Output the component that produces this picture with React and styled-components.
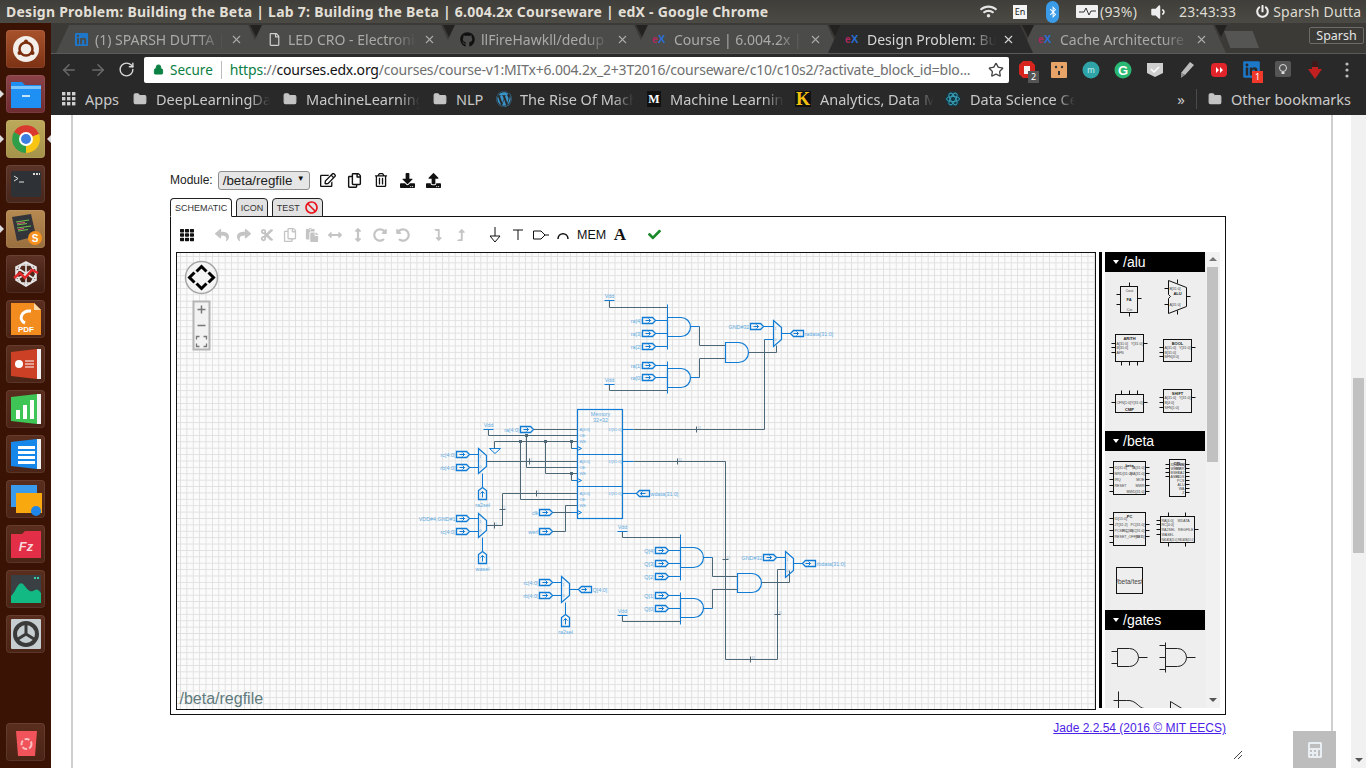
import React from "react";
import styled, { createGlobalStyle } from "styled-components";
import { ArrowLeft, ArrowRight, RotateCw, Star, Lock, X, Folder } from "lucide-react";
import {
  FaTh, FaReply, FaShare, FaCut, FaRegCopy, FaPaste, FaArrowsAltH, FaArrowsAltV, FaRedoAlt, FaUndoAlt,
  FaLevelDownAlt, FaLevelUpAlt, FaCheck, FaRegEdit, FaRegTrashAlt, FaDownload, FaUpload,
  FaCalculator, FaBan, FaLinkedin, FaGithub, FaRegFile, FaWordpress, FaBluetoothB, FaPowerOff, FaVolumeDown, FaWifi,
} from "react-icons/fa";

const UI = '"Noto Sans", "Open Sans", sans-serif';
const ARIAL = '"Liberation Sans", Arial, sans-serif';

const GlobalStyle = createGlobalStyle`
  html, body { margin: 0; padding: 0; background: #fff; overflow: hidden; }
  * { box-sizing: border-box; }
`;

const Screen = styled.div`
  width: 1366px; height: 768px; position: relative; overflow: hidden;
  display: flex; flex-direction: column; font-family: ${UI};
`;

/* top panel of the desktop */
const TopBar = styled.div`
  height: 23px; flex: none; display: flex; align-items: center; padding-left: 6px;
  background: linear-gradient(#3f3e3a, #4b4a44); color: #e2dfd6;
`;
const WinTitle = styled.div`
  width: 974px; font-weight: 700; font-size: 14px; letter-spacing: 0.25px; white-space: nowrap; overflow: hidden;
`;
const Tray = styled.div`
  display: flex; align-items: center; margin-left: ${(p) => p.$ml || 0}px; font-size: 14px; letter-spacing: 0.2px; color: #dedbd2; white-space: nowrap;
`;
const EnBox = styled.div`
  width: 14px; height: 14px; background: #f4f4f4; color: #222; font-size: 9px; letter-spacing: 0; display: flex; align-items: center; justify-content: center;
`;
const BtPill = styled.div`
  width: 13px; height: 22px; border-radius: 7px; background: #3a9be8; color: #fff; display: flex; align-items: center; justify-content: center;
`;

const Body = styled.div`
  flex: 1; display: flex; min-height: 0;
`;

/* launcher */
const Launcher = styled.div`
  width: 51px; flex: none; background: #3a1305; display: flex; flex-direction: column; align-items: center;
  gap: 7px; padding: 7px 0 7px 0;
`;
const Tile = styled.div`
  width: 39px; height: 38px; border-radius: 4px; position: relative; flex: none;
  display: flex; align-items: center; justify-content: center;
  background: linear-gradient(${(p) => p.$a}, ${(p) => p.$b});
  box-shadow: inset 0 0 0 1px rgba(255,255,255,0.08);
  margin-top: ${(p) => (p.$bottom ? "auto" : "0")};
`;
const Pip = styled.div`
  position: absolute; top: 15px; width: 0; height: 0; border-top: 4px solid transparent; border-bottom: 4px solid transparent;
  ${(p) => (p.$right ? "right: -6px; border-right: 4px solid #ddd;" : "left: -6px; border-left: 4px solid #ddd;")}
`;

const Main = styled.div`
  flex: 1; min-width: 0; display: flex; flex-direction: column;
`;

/* chrome tab strip */
const TabStrip = styled.div`
  height: 30px; flex: none; background: #3b3a36; display: flex; align-items: flex-end; padding-left: 5px; position: relative;
`;
const TabWrap = styled.div`
  position: relative; width: 205px; height: 28px; margin-right: -12px; flex: none; z-index: ${(p) => (p.$active ? 2 : 1)};
`;
const TabShape = styled.div`
  width: 100%; height: 100%; display: flex; align-items: center; padding: 0 18px 0 17px;
  clip-path: polygon(0 100%, 13px 0, calc(100% - 13px) 0, 100% 100%);
  background: ${(p) => (p.$active ? "#2b2b2b" : "#4b4b49")};
  color: ${(p) => (p.$active ? "#d6d6d6" : "#aaaaa6")};
  font-size: 14px;
`;
const Notch = styled.div`
  position: absolute; top: 0; right: -1px; width: 0; height: 0; border-left: 6px solid transparent; border-right: 6px solid transparent;
  border-top: 12px solid #232220;
`;
const TabIcon = styled.div`
  width: 16px; height: 16px; flex: none; display: flex; align-items: center; justify-content: center; margin-right: 6px; font-size: 11px; font-weight: 700;
`;
const TabLabel = styled.div`
  flex: 1; white-space: nowrap; overflow: hidden; min-width: 0;
  mask-image: linear-gradient(to right, #000 80%, transparent);
`;
const NewTab = styled.div`
  width: 35px; height: 17px; margin: 0 0 5px 10px; background: #555553; flex: none;
  clip-path: polygon(0 0, 82% 0, 100% 100%, 18% 100%);
`;
const Profile = styled.div`
  position: absolute; right: 2px; top: 4px; width: 55px; height: 17px; border: 1px solid #6d6c68; border-radius: 2px;
  color: #e4e4e4; font-size: 12.5px; display: flex; align-items: center; justify-content: center;
`;

/* chrome toolbar */
const NavRow = styled.div`
  height: 32px; flex: none; background: #292929; border-top: 1px solid #5a5a58; display: flex; align-items: center; padding-left: 3px;
`;
const NavBtn = styled.div`
  width: 29px; display: flex; justify-content: center; color: ${(p) => (p.$off ? "#6a6a6a" : "#d8d8d8")};
`;
const Omni = styled.div`
  width: 865px; height: 26px; margin-left: 3px; background: #fff; border-radius: 2px; display: flex; align-items: center;
  padding: 0 5px 0 9px; font-size: 14px; white-space: nowrap; color: #6f6f6f; flex: none; letter-spacing: -0.19px;
`;
const Secure = styled.span`
  color: #0b8043; margin-left: 6px; letter-spacing: 0; font-size: 13.5px;
`;
const OmniSep = styled.span`
  width: 1px; height: 18px; background: #bdbdbd; margin: 0 8px 0 8px;
`;
const Https = styled.span` color: #0b8043; `;
const Domain = styled.span` color: #111; `;
const OmniStar = styled.div` margin-left: auto; display: flex; color: #444; `;
const ExtSlot = styled.div`
  width: 32px; height: 24px; flex: none; position: relative; display: flex; align-items: center; justify-content: center;
  margin-left: ${(p) => p.$ml || 0}px;
`;
const Badge = styled.div`
  position: absolute; left: 17px; top: 13px; width: 11px; height: 12px; color: #fff; font-size: 9px; display: flex; align-items: center; justify-content: center;
  background: ${(p) => p.$bg};
`;

/* bookmarks */
const BookmarkRow = styled.div`
  height: 30px; flex: none; background: #292929; display: flex; align-items: center; padding: 0 15px 2px 11px; color: #c9c9c9; font-size: 14.5px;
`;
const Bookmark = styled.div`
  display: flex; align-items: center; gap: ${(p) => p.$gap || 9}px; width: ${(p) => p.$w}px; flex: none; white-space: nowrap;
  svg { flex: none; }
`;
const BookmarkText = styled.div`
  overflow: hidden; white-space: nowrap; max-width: 114px;
  ${(p) => p.$fade && "mask-image: linear-gradient(to right, #000 82%, transparent);"}
`;
const Chevrons = styled.div` margin-left: auto; font-size: 15px; color: #c9c9c9; `;
const BmSep = styled.div` width: 1px; height: 20px; background: #4a4a4a; margin: 0 11px 0 11px; `;
const MarkSquare = styled.div`
  width: ${(p) => p.$w}px; height: 16px; background: ${(p) => p.$bg}; color: ${(p) => p.$fg}; font-family: "Liberation Serif", serif; font-weight: 700;
  font-size: ${(p) => p.$fs}px; display: flex; align-items: center; justify-content: center; flex: none;
`;

/* page */
const PageWrap = styled.div`
  flex: 1; min-height: 0; display: flex; background: #fff;
`;
const Content = styled.div`
  width: 1262px; margin-left: 20px; flex: none; border-left: 2px solid #cfcfcf; border-right: 2px solid #cfcfcf; padding: 55px 0 0 97px;
`;
const ModuleRow = styled.div`
  display: flex; align-items: center; height: 20px; font-family: ${ARIAL}; font-size: 12px; color: #222; margin-bottom: 8px;
`;
const ModuleSelect = styled.div`
  width: 92px; height: 19px; margin-left: 5px; background: #e6e6e6; border: 1px solid #8f8f8f; border-radius: 3px; display: flex; align-items: center;
  padding-left: 4px; font-size: 13.33px; color: #222; white-space: nowrap; justify-content: space-between; padding-right: 4px; margin-right: 5px;
`;
const SelArrow = styled.span` font-size: 8px; color: #111; margin-top: -3px; `;
const ModIcon = styled.div` width: 26.5px; display: flex; justify-content: center; color: #111; `;
const TabRow = styled.div`
  display: flex; gap: 3.5px; height: 19px; margin-bottom: -1px; position: relative; z-index: 1;
`;
const EdTab = styled.div`
  height: 19px; border: 1px solid #222; border-radius: 4px 4px 0 0; padding: 0 4px; display: flex; align-items: center; gap: 5px;
  font-family: ${ARIAL}; font-size: 9px; color: #333; background: ${(p) => (p.$active ? "#fff" : "#e2e2e2")};
  ${(p) => p.$active && "border-bottom-color: #fff;"}
`;
const Frame = styled.div`
  width: 1056px; height: 499px; border: 1px solid #111; background: #fff; display: flex; flex-direction: column;
`;
const ToolBar = styled.div`
  height: 35px; flex: none; display: flex; align-items: center; gap: 12px; padding-left: 4.6px; font-family: ${ARIAL};
`;
const ToolGroup = styled.div` display: flex; align-items: center; `;
const Tool = styled.div`
  width: ${(p) => p.$w || 22.7}px; display: flex; justify-content: center; align-items: center;
  color: ${(p) => p.$color || "#111"}; font-size: ${(p) => p.$fs || 14}px;
`;
const SerifA = styled(Tool)`
  font-family: "Liberation Serif", serif; font-weight: 700;
`;
const EditorBody = styled.div`
  flex: 1; min-height: 0; display: flex; align-items: flex-start; padding-left: 5px;
`;
const Canvas = styled.div`
  width: 920px; height: 458px; border: 1px solid #111; flex: none; line-height: 0;
  background-color: #fbfbfb;
  background-image: linear-gradient(#e0e0e0 1px, transparent 1px), linear-gradient(90deg, #e0e0e0 1px, transparent 1px);
  background-size: 6.4px 6.4px;
  background-position: 3px 3px;
`;
const ThickBar = styled.div`
  width: 3px; height: 456px; background: #000; margin: 0 3px; flex: none;
`;
const Bin = styled.div`
  width: 115px; height: 456px; flex: none; display: flex; background: #eee;
`;
const BinColumn = styled.div`
  width: 100px; flex: none; overflow: hidden; line-height: 0;
`;
const BinHeader = styled.div`
  height: 20px; background: #000; color: #fff; font-family: ${ARIAL}; font-size: 14px; line-height: 20px; display: flex; align-items: center; padding-left: 8px;
`;
const BinCaret = styled.span`
  width: 0; height: 0; border-left: 3.5px solid transparent; border-right: 3.5px solid transparent; border-top: 4px solid #fff; margin-right: 4px;
`;
const BinScroll = styled.div`
  flex: 1; display: flex; flex-direction: column; align-items: center; padding-top: 5px; position: relative; margin-left: 1px; background: #f1f1f1;
`;
const ArrowUp = styled.div`
  width: 0; height: 0; border-left: 4px solid transparent; border-right: 4px solid transparent; border-bottom: 4px solid #777; flex: none;
  margin-top: ${(p) => p.$mt || 0}px;
`;
const ArrowDown = styled.div`
  width: 0; height: 0; border-left: 4px solid transparent; border-right: 4px solid transparent; border-top: 4px solid #555; flex: none;
  margin-top: auto; margin-bottom: ${(p) => p.$mb || 0}px;
`;
const BinThumb = styled.div`
  width: 11px; height: 195px; background: #c1c1c1; margin-top: 6px; flex: none; margin-right: 2px;
`;
const Footer = styled.div`
  width: 1056px; text-align: right; font-family: ${ARIAL}; font-size: 12px; line-height: 14px; padding-top: 6px;
`;
const JadeLink = styled.a`
  color: #4b22e6; text-decoration: underline;
`;
const PageScroll = styled.div`
  width: 15px; margin-left: auto; background: #f1f1f1; display: flex; flex-direction: column; align-items: center; flex: none;
`;
const PageThumb = styled.div`
  width: 11px; height: 175px; background: #c1c1c1; margin-top: 263px; flex: none;
`;
const CalcButton = styled.div`
  position: absolute; left: 1293px; top: 731px; width: 43px; height: 37px; background: #bdbdbd; color: #e9eef3;
  display: flex; align-items: center; justify-content: center; font-size: 16px;
`;
const ResizeGrip = styled.svg`
  position: absolute; left: 1233px; top: 750px;
`;

/* schematic text */
const Lbl = styled.text`
  font-family: ${ARIAL}; font-size: ${(p) => p.$s || 5.4}px; fill: ${(p) => p.$c || "#62aae0"};
`;

const BLUE = "#0f7bd4";
const GRAY = "#4d6776";

const Port = ({ x, y, label, left, back }) => {
  const shape = left
    ? `M${x + 13} ${y - 3}H${x + 3}L${x} ${y}L${x + 3} ${y + 3}H${x + 13}Z`
    : `M${x} ${y - 3}H${x + 10}L${x + 13} ${y}L${x + 10} ${y + 3}H${x}Z`;
  const arrow = back
    ? `M${x + 9} ${y}H${x + 4}M${x + 6} ${y - 2}L${x + 4} ${y}L${x + 6} ${y + 2}`
    : `M${x + 3} ${y}H${x + 8}M${x + 6} ${y - 2}L${x + 8} ${y}L${x + 6} ${y + 2}`;
  return (
    <g>
      <path d={shape} fill="none" stroke={BLUE} strokeWidth={1.3} />
      <path d={arrow} fill="none" stroke={BLUE} />
      {left ? (
        <Lbl x={x + 14} y={y + 2}>{label}</Lbl>
      ) : (
        <Lbl x={x - 1} y={y + 2} textAnchor="end">{label}</Lbl>
      )}
    </g>
  );
};

const UpPort = ({ x, y, label }) => (
  <g>
    <path d={`M${x - 4} ${y + 12}V${y + 3}L${x} ${y}L${x + 4} ${y + 3}V${y + 12}Z`} fill="none" stroke={BLUE} strokeWidth={1.3} />
    <path d={`M${x} ${y + 10}V${y + 4}M${x - 2} ${y + 6}L${x} ${y + 4}L${x + 2} ${y + 6}`} fill="none" stroke={BLUE} />
    <Lbl x={x} y={y + 19} textAnchor="middle">{label}</Lbl>
  </g>
);

const AndGate = ({ x, t, b, r }) => {
  const h = (b - t) / 2;
  return <path d={`M${x} ${t}H${r - h}A${h} ${h} 0 0 1 ${r - h} ${b}H${x}Z`} fill="none" stroke={BLUE} strokeWidth={1.2} />;
};

const Mux = ({ x, t, b }) => (
  <g>
    <path d={`M${x} ${t}L${x + 8} ${t + 7}V${b - 7}L${x} ${b}Z`} fill="none" stroke={BLUE} strokeWidth={1.2} />
    <Lbl x={x + 1} y={t + 9} $s={3.5}>1</Lbl>
    <Lbl x={x + 1} y={b - 6} $s={3.5}>0</Lbl>
  </g>
);

const Tick = ({ x, y, flat, n = "32" }) => (
  <g>
    <path d={flat ? `M${x - 3} ${y}H${x + 3}` : `M${x} ${y - 3}V${y + 3}`} stroke={GRAY} fill="none" />
    <Lbl x={x + 1} y={y - 1} $s={3} $c="#8fb4cc">{n}</Lbl>
  </g>
);

const Vdd = ({ x, y }) => (
  <g>
    <Lbl x={x} y={y - 3} textAnchor="middle">Vdd</Lbl>
    <path d={`M${x - 5} ${y}H${x + 5}`} stroke={BLUE} />
  </g>
);

const Junction = ({ x, y }) => <rect x={x - 1.5} y={y - 1.5} width={3} height={3} fill={GRAY} />;

const grayWires = [
  "M609 300V307H667", "M609 384V390H667", "M699 326V345H725", "M699 377V358H725", "M748 352H776V345",
  "M633 429H764V339", "M633 461H725V659H777V569H785",
  "M488 429V435H577", "M494 448V441H577", "M571 441V448H577",
  "M526 435V467H577", "M520 441V499H577", "M545 441V473H577", "M571 473V480H577",
  "M533 429H577", "M486 461H577", "M486 525H502V493H577", "M552 531H565V505H577", "M552 512H577",
  "M622 531V537H680", "M622 615V621H680", "M712 557V576H737", "M712 608V589H737", "M761 582H789V570",
];
const blueWires = [
  "M667 304V349", "M667 361V393", "M655 320H667", "M655 333H667", "M655 346H667", "M655 365H667", "M655 377H667",
  "M690 326H699", "M690 377H699", "M763 326H773", "M764 339H773", "M781 333H790",
  "M622 429H633", "M622 461H633", "M622 493H636",
  "M469 454H478", "M469 467H478", "M482 473V487", "M469 518H478", "M469 531H478", "M482 537V551",
  "M572 448H577", "M572 480H577", "M571 512H577",
  "M680 534V580", "M680 592V624", "M668 550H680", "M668 563H680", "M668 576H680", "M668 595H680", "M668 608H680",
  "M703 557H712", "M703 608H712", "M776 557H785", "M793 563H802", "M552 582H561", "M552 595H561", "M569 589H578", "M565 602V614",
];

const Schematic = () => (
  <svg width="918" height="456" viewBox="176.5 252.5 918 456" style={{ display: "block" }}>
    {grayWires.map((d) => <path key={d} d={d} fill="none" stroke={GRAY} />)}
    {blueWires.map((d) => <path key={d} d={d} fill="none" stroke={BLUE} />)}

    <Vdd x={609} y={300} />
    <Vdd x={609} y={384} />
    <Vdd x={488} y={429} />
    <Vdd x={622} y={531} />
    <Vdd x={622} y={615} />

    <Port x={642} y={320} label="ra[4]" />
    <Port x={642} y={333} label="ra[3]" />
    <Port x={642} y={346} label="ra[2]" />
    <Port x={642} y={365} label="ra[1]" />
    <Port x={642} y={377} label="ra[0]" />
    <AndGate x={667} t={317} b={336} r={690} />
    <AndGate x={667} t={368} b={387} r={690} />
    <AndGate x={725} t={342} b={362} r={748} />
    <Mux x={773} t={320} b={346} />
    <Port x={750} y={326} label="GND#32" />
    <Port x={790} y={333} label="radata[31:0]" left />

    {/* memory */}
    <rect x={577} y={409} width={45} height={109} fill="none" stroke={BLUE} strokeWidth={1.2} />
    <path d="M577 454H622M577 486H622" stroke={BLUE} />
    <Lbl x={600} y={415} textAnchor="middle">Memory</Lbl>
    <Lbl x={600} y={421} textAnchor="middle">32×32</Lbl>
    {[429, 461, 493].map((y) => (
      <g key={y}>
        <Lbl x={579} y={y + 1.5} $s={4}>A[4:0]</Lbl>
        <Lbl x={579} y={y + 7.5} $s={4}>OE</Lbl>
        <Lbl x={579} y={y + 13.5} $s={4}>WE</Lbl>
        <path d={`M577 ${y + 17}L581 ${y + 19}L577 ${y + 21}`} fill="none" stroke={BLUE} />
        <Lbl x={621} y={y + 1.5} $s={4} textAnchor="end">D[31:0]</Lbl>
      </g>
    ))}
    <Port x={520} y={429} label="ra[4:0]" />
    <path d="M489 448H500L494.5 453Z" fill="none" stroke={BLUE} />
    <Junction x={526} y={435} />
    <Junction x={520} y={441} />
    <Junction x={545} y={441} />
    <Junction x={571} y={441} />
    <Junction x={571} y={473} />

    <Port x={456} y={454} label="rc[4:0]" />
    <Port x={456} y={467} label="rb[4:0]" />
    <Mux x={478} t={448} b={473} />
    <UpPort x={482} y={487} label="ra2sel" />
    <Port x={456} y={518} label="VDD#4,GND#1" />
    <Port x={456} y={531} label="rc[4:0]" />
    <Mux x={478} t={513} b={537} />
    <UpPort x={482} y={551} label="wasel" />
    <Port x={539} y={512} label="clk" />
    <Port x={539} y={531} label="werf" />
    <Port x={636} y={493} label="wdata[31:0]" left back />
    <Tick x={696} y={429} />
    <Tick x={677} y={461} />
    <Tick x={529} y={461} n="5" />
    <Tick x={536} y={493} n="5" />
    <Tick x={502} y={509} flat n="5" />
    <Tick x={494} y={525} n="5" />
    <Tick x={725} y={559} flat />
    <Tick x={777} y={614} flat />
    <Tick x={750} y={659} />

    {/* lower half */}
    <Port x={655} y={550} label="Q[4]" />
    <Port x={655} y={563} label="Q[3]" />
    <Port x={655} y={576} label="Q[2]" />
    <Port x={655} y={595} label="Q[1]" />
    <Port x={655} y={608} label="Q[0]" />
    <AndGate x={680} t={547} b={567} r={703} />
    <AndGate x={680} t={598} b={617} r={703} />
    <AndGate x={737} t={573} b={592} r={761} />
    <Mux x={785} t={551} b={577} />
    <Port x={763} y={557} label="GND#32" />
    <Port x={802} y={563} label="rbdata[31:0]" left />

    <Port x={539} y={582} label="rc[4:0]" />
    <Port x={539} y={595} label="rb[4:0]" />
    <Mux x={561} t={576} b={602} />
    <Port x={578} y={589} label="Q[4:0]" left />
    <UpPort x={565} y={614} label="ra2sel" />

    {/* pan and zoom controls */}
    <circle cx={201} cy={277} r={16} fill="#f4f4f4" stroke="#a5a5a5" strokeWidth={1.5} />
    <g fill="none" stroke="#000" strokeWidth={3}>
      <path d="M196 271L201 266L206 271" />
      <path d="M196 283L201 288L206 283" />
      <path d="M194 272L189 277L194 282" />
      <path d="M208 272L213 277L208 282" />
    </g>
    <rect x={193} y={301} width={16} height={48} fill="#f2f2f2" stroke="#b5b5b5" strokeWidth={2} />
    <path d="M197 309H205M201 305V313M197 325H205" stroke="#777" strokeWidth={1.5} fill="none" />
    <path d="M196 339V336H199M203 336H206V339M206 343V346H203M199 346H196V343" stroke="#777" strokeWidth={1.3} fill="none" />

    <Lbl x={179} y={703} $s={16} $c="#5f7a7c">/beta/regfile</Lbl>
  </svg>
);

/* parts bin chips */
const Chip = ({ x, y, w, h, name, nameY, left = [], right = [], top = [], bottom = [] }) => (
  <g>
    <rect x={x} y={y} width={w} height={h} fill="none" stroke="#111" />
    {name && (
      <Lbl x={x + w / 2} y={nameY || y + 5} textAnchor="middle" $s={4} $c="#222" fontWeight="700">{name}</Lbl>
    )}
    {left.map(([t, py]) => (
      <g key={`${t}${py}`}>
        <path d={`M${x - 4} ${py}H${x}`} stroke="#111" />
        <Lbl x={x + 1} y={py + 1.5} $s={3.6} $c="#444">{t}</Lbl>
      </g>
    ))}
    {right.map(([t, py]) => (
      <g key={`${t}${py}`}>
        <path d={`M${x + w} ${py}H${x + w + 4}`} stroke="#111" />
        <Lbl x={x + w - 1} y={py + 1.5} $s={3.6} $c="#444" textAnchor="end">{t}</Lbl>
      </g>
    ))}
    {top.map((px) => <path key={px} d={`M${px} ${y - 4}V${y}`} stroke="#111" />)}
    {bottom.map((px) => <path key={px} d={`M${px} ${y + h}V${y + h + 4}`} stroke="#111" />)}
  </g>
);

const BinGroup = ({ top, h, children }) => (
  <svg width="100" height={h} viewBox={`1104.5 ${top - 0.5} 100 ${h}`} style={{ display: "block" }}>{children}</svg>
);

const AluParts = () => (
  <BinGroup top={272} h={159}>
    <Chip x={1120} y={286} w={17} h={26} name="FA" nameY={300} left={[["", 294], ["", 304]]} right={[["", 298]]} top={[1129]} bottom={[1129]} />
    <Lbl x={1129} y={291} $s={3.5} $c="#444" textAnchor="middle">Cout</Lbl>
    <Lbl x={1129} y={310} $s={3.5} $c="#444" textAnchor="middle">Cin</Lbl>
    <path d="M1168 280L1186 287V306L1168 313V298L1170 296L1168 294Z" fill="none" stroke="#111" />
    <path d="M1177 279V283M1186 296H1190M1164 288H1168M1164 304H1168M1177 310V314" stroke="#111" />
    <Lbl x={1177} y={294} $s={4} $c="#222" fontWeight="700" textAnchor="middle">ALU</Lbl>
    <Lbl x={1169} y={289} $s={3.5} $c="#444">B[31:0]</Lbl>
    <Lbl x={1169} y={305} $s={3.5} $c="#444">A[31:0]</Lbl>
    <Chip x={1115} y={334} w={28} h={27} name="ARITH" left={[["A[31:0]", 343], ["B[31:0]", 347], ["AFN", 352]]} right={[["Y[31:0]", 343]]} bottom={[1121, 1129, 1137]} />
    <Chip x={1163} y={339} w={28} h={22} name="BOOL" left={[["A[31:0]", 347], ["B[31:0]", 352], ["BFN[3:0]", 356]]} right={[["Y[31:0]", 347]]} />
    <Chip x={1115} y={394} w={28} h={18} name="CMP" nameY={410} left={[["CFN[1:0]", 402]]} right={[["Y[31:0]", 402]]} top={[1121, 1129, 1137]} />
    <Chip x={1163} y={389} w={28} h={23} name="SHIFT" left={[["A[31:0]", 397], ["B[4:0]", 402], ["SFN[1:0]", 407]]} right={[["Y[31:0]", 397]]} />
  </BinGroup>
);

const BetaParts = () => (
  <BinGroup top={451} h={159}>
    <Chip x={1113} y={461} w={32} h={33} name="beta" left={[["ID[31:0]", 467], ["MRD[31:0]", 473], ["IRQ", 479], ["RESET", 485], ["", 491]]} right={[["IA[31:0]", 467], ["MA[31:0]", 473], ["MOE", 479], ["MWR", 485], ["MWD[31:0]", 491]]} />
    <Chip x={1169} y={459} w={16} h={37} name="CTL" left={[["ID[31:26]", 464], ["WERF", 468], ["BSEL", 472], ["ASEL", 476]]} right={[["MOE", 464], ["MWR", 468], ["RA2", 472], ["WDS", 476], ["PCS", 480], ["ALU", 484], ["WA", 488], ["Z", 492]]} />
    <Chip x={1113} y={512} w={32} h={33} name="PC" left={[["ID[15:0]", 518], ["JT[31:2]", 524], ["PCSEL[2:0]", 530], ["RESET_OFFSET", 536], ["", 542]]} right={[["PC[31:0]", 524], ["PC_INC[31:0]", 530], ["[31:0]", 536]]} />
    <Chip x={1160} y={516} w={34} h={26} left={[["RA[4:0]", 520], ["RC[4:0]", 524], ["RA2SEL", 529], ["WASEL", 534]]} right={[["REGFILE", 529]]} top={[1168, 1185]} bottom={[1168, 1185]} />
    <Lbl x={1177} y={521} $s={3.5} $c="#444">WDATA</Lbl>
    <Lbl x={1161} y={540} $s={3.5} $c="#444" textLength={32} lengthAdjust="spacingAndGlyphs">RADATA[31:0] RBDATA[31:0]</Lbl>
    <rect x={1116} y={567} width={26} height={26} fill="none" stroke="#111" />
    <Lbl x={1129} y={583} $s={6.5} $c="#444" textAnchor="middle">/beta/test</Lbl>
  </BinGroup>
);

const GateParts = () => (
  <BinGroup top={630} h={78}>
    <path d="M1117 648H1129A9 9 0 0 1 1129 666H1117ZM1111 651H1117M1111 663H1117M1138 657H1147" fill="none" stroke="#222" />
    <path d="M1165 648H1177A9 9 0 0 1 1177 666H1165ZM1165 642V672M1159 645H1165M1159 657H1165M1159 669H1165M1186 657H1195" fill="none" stroke="#222" />
    <path d="M1118 691V709M1113 700H1126C1136 699 1138 708 1144 708H1145" fill="none" stroke="#222" />
    <path d="M1170 701V709M1170 701L1183 709" fill="none" stroke="#222" />
  </BinGroup>
);

/* tool icons that no package has */
const GroundIcon = () => (
  <svg width="16" height="18" viewBox="0 0 16 18"><path d="M8 1V10M3 10H13L8 16Z" fill="none" stroke="#111" strokeWidth="1" /></svg>
);
const TermIcon = () => (
  <svg width="16" height="16" viewBox="0 0 16 16"><path d="M3 3H13M8 3V13" fill="none" stroke="#111" /></svg>
);
const BufIcon = () => (
  <svg width="18" height="16" viewBox="0 0 18 16"><path d="M1.5 4H9L13 8L9 12H1.5ZM13 8H17" fill="none" stroke="#111" /></svg>
);
const ArcIcon = () => (
  <svg width="14" height="14" viewBox="0 0 14 14"><path d="M2 11C2 4 12 4 12 11" fill="none" stroke="#111" strokeWidth="1.5" /></svg>
);
const NoEntry = () => <FaBan size={13} color="#e8131b" />;

/* launcher icons */
const Sv = ({ children }) => <svg width="34" height="34" viewBox="0 0 34 34">{children}</svg>;
const launcherIcons = [
  { a: "#a8522c", b: "#7c3214", pip: false, icon: <Sv><circle cx="17" cy="17" r="13" fill="#f3eee9" /><circle cx="17" cy="17" r="6.5" fill="none" stroke="#7a2e0e" strokeWidth="2.5" /><circle cx="17" cy="9.5" r="2" fill="#7a2e0e" /><circle cx="10.5" cy="21" r="2" fill="#7a2e0e" /><circle cx="23.5" cy="21" r="2" fill="#7a2e0e" /></Sv> },
  { a: "#8b4348", b: "#6e2b30", pip: true, icon: <Sv><path d="M2 5H13L16 8H32V31H2Z" fill="#1e8ff3" /><path d="M2 9H32V12H2Z" fill="#7cc6fb" /><path d="M13 19H21" stroke="#fff" strokeWidth="1.5" /></Sv> },
  { a: "#bda95a", b: "#a5934a", pip: true, pipR: true, icon: <Sv><path d="M17 17L5 10A14 14 0 0 1 30 12Z" fill="#d9392e" /><path d="M17 17L30 12A14 14 0 0 1 17 31Z" fill="#f7c614" /><path d="M17 17L17 31A14 14 0 0 1 5 10Z" fill="#2f9e49" /><circle cx="17" cy="17" r="7" fill="#fff" /><circle cx="17" cy="17" r="5" fill="#3d7fe0" /></Sv> },
  { a: "#5b3428", b: "#47261c", pip: false, icon: <Sv><rect x="2" y="4" width="30" height="26" rx="2" fill="#2e3236" /><path d="M5 9L9 11.5L5 14M10 15H15" fill="none" stroke="#ddd" /><path d="M24 7H31" stroke="#ddd" strokeWidth="2" strokeDasharray="2 1" /></Sv> },
  { a: "#b78a52", b: "#9a6f3f", pip: true, icon: <Sv><path d="M3 5L22 2L27 24L8 29Z" fill="#33353a" /><path d="M7 10L20 8M8 13L18 11.5M8 16L22 14M9 19L19 17.5" stroke="#6cc04a" strokeWidth="1.2" /><path d="M8 11.5L16 10.5M9 17.5L15 16.5" stroke="#e05a7a" strokeWidth="1.2" /><circle cx="26" cy="26" r="7" fill="#f5911e" /><Lbl x="26" y="30" $s={10} $c="#fff" textAnchor="middle" fontWeight="700">S</Lbl></Sv> },
  { a: "#5c3224", b: "#3e1b10", pip: false, icon: <Sv><path d="M17 5L27 10V23L17 29L7 23V10Z M17 5V29 M7 10L27 23 M27 10L7 23 M12 8L7 17L12 26L22 26L27 17L22 8Z" fill="none" stroke="#e6e6e6" strokeWidth="1.6" /><path d="M5 21L11 16L16 21L23 13L29 16" fill="none" stroke="#e3272b" strokeWidth="2.5" /></Sv> },
  { a: "#5a2e1e", b: "#4a2416", pip: false, icon: <Sv><path d="M2 1H25L32 8V33H2Z" fill="#f28c1f" /><path d="M25 1L32 8H25Z" fill="#fbd9a8" /><path d="M22 9C12 8 9 18 16 21" fill="none" stroke="#fff" strokeWidth="3" /><Lbl x="17" y="30" $s={8} $c="#fff" textAnchor="middle" fontWeight="700">PDF</Lbl></Sv> },
  { a: "#5a2e1e", b: "#4a2416", pip: false, icon: <Sv><path d="M2 5L28 2V32L2 29Z" fill="#cc4125" /><path d="M28 2H32V32H28Z" fill="#f2f2f2" /><circle cx="10" cy="17" r="4" fill="#fff" /><path d="M16 14H25M16 17H25M16 20H25" stroke="#fff" /></Sv> },
  { a: "#5a2e1e", b: "#4a2416", pip: false, icon: <Sv><path d="M2 5L28 2V32L2 29Z" fill="#3fc456" /><path d="M28 2H32V32H28Z" fill="#f2f2f2" /><path d="M7 18H11V27H7ZM14 13H18V27H14ZM21 8H25V27H21Z" fill="#fff" /></Sv> },
  { a: "#5a2e1e", b: "#4a2416", pip: false, icon: <Sv><path d="M2 5L28 2V32L2 29Z" fill="#1788ea" /><path d="M28 2H32V32H28Z" fill="#f2f2f2" /><path d="M9 9H26V12H9ZM9 14H26V17H9ZM9 19H26V22H9ZM9 24H26V27H9Z" fill="#fff" /></Sv> },
  { a: "#5a2e1e", b: "#4a2416", pip: false, icon: <Sv><rect x="2" y="3" width="26" height="22" fill="#3a9bec" /><rect x="7" y="11" width="26" height="20" fill="#f9a90e" /><circle cx="27" cy="29" r="5" fill="#1d86e8" /></Sv> },
  { a: "#5a2e1e", b: "#4a2416", pip: false, icon: <Sv><path d="M2 7H13L16 4H32V31H2Z" fill="#e32e48" /><Lbl x="17" y="24" $s={13} $c="#fbd7dc" textAnchor="middle" fontWeight="700" fontStyle="italic">Fz</Lbl></Sv> },
  { a: "#5a2e1e", b: "#4a2416", pip: false, icon: <Sv><rect x="2" y="3" width="30" height="28" fill="#3a3f44" /><path d="M2 24C7 20 9 8 14 12C18 16 20 22 26 18C29 16 31 20 32 21V31H2Z" fill="#13b983" /><path d="M25 6H31" stroke="#3bd0a0" strokeWidth="2" strokeDasharray="2 1" /></Sv> },
  { a: "#5a2e1e", b: "#4a2416", pip: false, icon: <Sv><rect x="2" y="2" width="30" height="30" rx="1" fill="#c5cdd0" /><circle cx="17" cy="17" r="11" fill="none" stroke="#3a3a3a" strokeWidth="4" /><path d="M17 17V8M17 17L9 22M17 17L25 22" stroke="#3a3a3a" strokeWidth="3" /></Sv> },
  { a: "#5a2e1e", b: "#4a2416", pip: false, bottom: true, icon: <Sv><path d="M7 6H28L26 31H9Z" fill="#f0545a" /><circle cx="17.5" cy="19" r="5" fill="none" stroke="#f7c0c2" strokeWidth="2" strokeDasharray="5 2" /></Sv> },
];

const tabs = [
  { label: "(1) SPARSH DUTTA |", icon: <FaLinkedin size={15} color="#1f77c9" /> },
  { label: "LED CRO - Electronic", icon: <FaRegFile size={13} color="#cfcfcf" /> },
  { label: "llFireHawkll/dedup", icon: <FaGithub size={15} color="#111" /> },
  { label: "Course | 6.004.2x | e", edx: true },
  { label: "Design Problem: Bu", edx: true, active: true },
  { label: "Cache Architecture", edx: true },
];

const EdxMark = () => (
  <svg width="16" height="12" viewBox="0 0 16 12">
    <text x="0" y="10" fontFamily={ARIAL} fontSize="10" fontWeight="700" fill="#b5285f">e</text>
    <text x="6" y="10" fontFamily={ARIAL} fontSize="11" fontWeight="700" fill="#2a6fd6">X</text>
  </svg>
);

const extIcons = [
  { icon: <svg width="18" height="20" viewBox="0 0 18 20"><path d="M5 1H13L17 5V14L13 18H5L1 14V5Z" fill="#d8241f" /><path d="M6 14V6H12V14Z" fill="#f3f3f3" /></svg>, badge: "2", bg: "#555" },
  { icon: <svg width="16" height="16" viewBox="0 0 16 16"><rect width="16" height="16" rx="1" fill="#e8a468" /><circle cx="5" cy="5" r="1.2" fill="#333" /><circle cx="11" cy="5" r="1.2" fill="#333" /><path d="M7 9H9V13H7Z" fill="#333" /></svg> },
  { icon: <svg width="18" height="18" viewBox="0 0 18 18"><circle cx="9" cy="9" r="8.5" fill="#2fa4a8" /><text x="9" y="12" textAnchor="middle" fontFamily={ARIAL} fontSize="9" fill="#c9f0ee">m</text></svg> },
  { icon: <svg width="18" height="18" viewBox="0 0 18 18"><circle cx="9" cy="9" r="8.5" fill="#2ab673" /><text x="9" y="13.5" textAnchor="middle" fontFamily={ARIAL} fontSize="13" fontWeight="700" fill="#fff">G</text></svg> },
  { icon: <svg width="18" height="16" viewBox="0 0 18 16"><path d="M1 1H17V11L9 15L1 11Z" fill="#cfcfcf" /><path d="M5 7L8 10L13 5" fill="none" stroke="#fff" strokeWidth="1.5" /></svg> },
  { icon: <svg width="16" height="18" viewBox="0 0 16 18"><path d="M11 1L15 4L6 14L2 12Z" fill="#bdbdbd" /><path d="M2 12L6 14L2 17Z" fill="#8f8f8f" /></svg> },
  { icon: <svg width="18" height="16" viewBox="0 0 18 16"><rect x="1" y="1" width="16" height="14" rx="4" fill="#e2252b" /><path d="M6 5L9 8L6 11ZM10 5L13 8L10 11Z" fill="#fff" /></svg> },
  { icon: <FaLinkedin size={19} color="#1d78c8" />, badge: "1", bg: "#f0392b" },
  { icon: <svg width="16" height="18" viewBox="0 0 16 18"><rect width="16" height="16" rx="2" fill="#555" /><circle cx="8" cy="7" r="3.5" fill="none" stroke="#ddd" /><path d="M6.5 11H9.5V13H6.5Z" fill="#ddd" /></svg> },
  { icon: <svg width="14" height="18" viewBox="0 0 14 18"><path d="M4 0H10V8H14L7 18L0 8H4Z" fill="#c12020" /><path d="M4 0H10V6H4Z" fill="#3a1a1a" /></svg> },
  { icon: <svg width="4" height="16" viewBox="0 0 4 16"><circle cx="2" cy="2" r="1.6" fill="#bdbdbd" /><circle cx="2" cy="8" r="1.6" fill="#bdbdbd" /><circle cx="2" cy="14" r="1.6" fill="#bdbdbd" /></svg> },
];

const FolderIcon = () => <Folder size={14} fill="#c4c4c4" color="#c4c4c4" />;

const AppsGrid = () => (
  <svg width="14" height="14" viewBox="0 0 14 14" fill="#d0d0d0">
    {[0, 5, 10].flatMap((y) => [0, 5, 10].map((x) => <rect key={`${x}${y}`} x={x} y={y} width="3.4" height="3.4" />))}
  </svg>
);

const AtomMark = () => (
  <svg width="16" height="16" viewBox="0 0 16 16" fill="none" stroke="#3aa0b8">
    <circle cx="8" cy="8" r="7.5" fill="#123845" stroke="none" />
    <ellipse cx="8" cy="8" rx="6.5" ry="2.6" />
    <ellipse cx="8" cy="8" rx="6.5" ry="2.6" transform="rotate(60 8 8)" />
    <ellipse cx="8" cy="8" rx="6.5" ry="2.6" transform="rotate(120 8 8)" />
  </svg>
);

export default function App() {
  return (
    <Screen>
      <GlobalStyle />
      <TopBar>
        <WinTitle>Design Problem: Building the Beta | Lab 7: Building the Beta | 6.004.2x Courseware | edX - Google Chrome</WinTitle>
        <Tray><FaWifi size={17} color="#e4e4e4" /></Tray>
        <Tray $ml={16}><EnBox>En</EnBox></Tray>
        <Tray $ml={19}><BtPill><FaBluetoothB size={12} /></BtPill></Tray>
        <Tray $ml={17}>
          <svg width="23" height="13" viewBox="0 0 23 13"><rect width="22" height="13" rx="1" fill="#f1f1f1" /><path d="M3 7H8L10 3L13 10L15 6H20" fill="none" stroke="#333" /></svg>
        </Tray>
        <Tray $ml={1}>(93%)</Tray>
        <Tray $ml={12}><FaVolumeDown size={18} color="#eee" /></Tray>
        <Tray $ml={12}>23:43:33</Tray>
        <Tray $ml={20}><FaPowerOff size={13} color="#eee" /></Tray>
        <Tray $ml={4}>Sparsh Dutta</Tray>
      </TopBar>
      <Body>
        <Launcher>
          {launcherIcons.map((t, i) => (
            <Tile key={i} $a={t.a} $b={t.b} $bottom={t.bottom}>
              {t.pip && <Pip />}
              {t.pipR && <Pip $right />}
              {t.icon}
            </Tile>
          ))}
        </Launcher>
        <Main>
          <TabStrip>
            {tabs.map((t) => (
              <TabWrap key={t.label} $active={t.active}>
                <TabShape $active={t.active}>
                  <TabIcon>{t.edx ? <EdxMark /> : t.icon}</TabIcon>
                  <TabLabel>{t.label}</TabLabel>
                  <X size={13} style={{ flex: "none", marginLeft: 6 }} />
                </TabShape>
                <Notch />
              </TabWrap>
            ))}
            <NewTab />
            <Profile>Sparsh</Profile>
          </TabStrip>
          <NavRow>
            <NavBtn $off><ArrowLeft size={18} /></NavBtn>
            <NavBtn $off><ArrowRight size={18} /></NavBtn>
            <NavBtn><RotateCw size={17} /></NavBtn>
            <Omni>
              <Lock size={11} fill="#0b8043" color="#0b8043" />
              <Secure>Secure</Secure>
              <OmniSep />
              <Https>https</Https>://<Domain>courses.edx.org</Domain>/courses/course-v1:MITx+6.004.2x_2+3T2016/courseware/c10/c10s2/?activate_block_id=blo...
              <OmniStar><Star size={16} /></OmniStar>
            </Omni>
            {extIcons.map((e, i) => (
              <ExtSlot key={i} $ml={i === 0 ? 2 : 0}>
                {e.icon}
                {e.badge && <Badge $bg={e.bg}>{e.badge}</Badge>}
              </ExtSlot>
            ))}
          </NavRow>
          <BookmarkRow>
            <Bookmark $w={71}><AppsGrid /><BookmarkText>Apps</BookmarkText></Bookmark>
            <Bookmark $w={150}><FolderIcon /><BookmarkText $fade>DeepLearningData</BookmarkText></Bookmark>
            <Bookmark $w={150}><FolderIcon /><BookmarkText $fade>MachineLearning</BookmarkText></Bookmark>
            <Bookmark $w={63}><FolderIcon /><BookmarkText>NLP</BookmarkText></Bookmark>
            <Bookmark $w={151} $gap={8}><FaWordpress size={16} color="#3a93c8" /><BookmarkText $fade>The Rise Of Machines</BookmarkText></Bookmark>
            <Bookmark $w={148} $gap={9}><MarkSquare $w={14} $bg="#111" $fg="#fff" $fs={12}>M</MarkSquare><BookmarkText $fade>Machine Learning</BookmarkText></Bookmark>
            <Bookmark $w={150} $gap={9}><MarkSquare $w={16} $bg="#111" $fg="#f5c211" $fs={18}>K</MarkSquare><BookmarkText $fade>Analytics, Data Mining</BookmarkText></Bookmark>
            <Bookmark $w={130} $gap={9}><AtomMark /><BookmarkText $fade>Data Science Central</BookmarkText></Bookmark>
            <Chevrons>»</Chevrons>
            <BmSep />
            <Bookmark $w={143}><FolderIcon />Other bookmarks</Bookmark>
          </BookmarkRow>
          <PageWrap>
            <Content>
              <ModuleRow>
                Module:
                <ModuleSelect>/beta/regfile<SelArrow>▼</SelArrow></ModuleSelect>
                <ModIcon><FaRegEdit size={16} /></ModIcon>
                <ModIcon><FaRegCopy size={15} /></ModIcon>
                <ModIcon><FaRegTrashAlt size={14} /></ModIcon>
                <ModIcon><FaDownload size={15} /></ModIcon>
                <ModIcon><FaUpload size={15} /></ModIcon>
              </ModuleRow>
              <TabRow>
                <EdTab $active>SCHEMATIC</EdTab>
                <EdTab>ICON</EdTab>
                <EdTab>TEST <NoEntry /></EdTab>
              </TabRow>
              <Frame>
                <ToolBar>
                  <ToolGroup><Tool><FaTh /></Tool></ToolGroup>
                  <ToolGroup>
                    <Tool $color="#c4c4c4"><FaReply /></Tool>
                    <Tool $color="#c4c4c4"><FaShare /></Tool>
                    <Tool $color="#c4c4c4"><FaCut /></Tool>
                    <Tool $color="#c4c4c4"><FaRegCopy /></Tool>
                    <Tool $color="#c4c4c4"><FaPaste /></Tool>
                    <Tool $color="#c4c4c4"><FaArrowsAltH /></Tool>
                    <Tool $color="#c4c4c4"><FaArrowsAltV /></Tool>
                    <Tool $color="#c4c4c4"><FaRedoAlt /></Tool>
                    <Tool $color="#c4c4c4"><FaUndoAlt /></Tool>
                  </ToolGroup>
                  <ToolGroup>
                    <Tool $color="#c4c4c4" $fs={12}><FaLevelDownAlt /></Tool>
                    <Tool $color="#c4c4c4" $fs={12}><FaLevelUpAlt /></Tool>
                  </ToolGroup>
                  <ToolGroup>
                    <Tool><GroundIcon /></Tool>
                    <Tool><TermIcon /></Tool>
                    <Tool><BufIcon /></Tool>
                    <Tool><ArcIcon /></Tool>
                    <Tool $w={34} $fs={12.5}>MEM</Tool>
                    <SerifA $fs={17}>A</SerifA>
                  </ToolGroup>
                  <ToolGroup><Tool $color="#1a8a2a" $fs={13}><FaCheck /></Tool></ToolGroup>
                </ToolBar>
                <EditorBody>
                  <Canvas><Schematic /></Canvas>
                  <ThickBar />
                  <Bin>
                    <BinColumn>
                      <BinHeader><BinCaret />/alu</BinHeader>
                      <AluParts />
                      <BinHeader><BinCaret />/beta</BinHeader>
                      <BetaParts />
                      <BinHeader><BinCaret />/gates</BinHeader>
                      <GateParts />
                    </BinColumn>
                    <BinScroll>
                      <ArrowUp />
                      <BinThumb />
                      <ArrowDown $mb={6} />
                    </BinScroll>
                  </Bin>
                </EditorBody>
              </Frame>
              <Footer><JadeLink href="#">Jade 2.2.54 (2016 © MIT EECS)</JadeLink></Footer>
            </Content>
            <PageScroll>
              <PageThumb />
              <ArrowDown $mb={6} />
            </PageScroll>
          </PageWrap>
        </Main>
      </Body>
      <CalcButton><FaCalculator /></CalcButton>
      <ResizeGrip width="10" height="10" viewBox="0 0 10 10">
        <path d="M1 9L9 1M5 9L9 5" stroke="#444" fill="none" />
      </ResizeGrip>
    </Screen>
  );
}
